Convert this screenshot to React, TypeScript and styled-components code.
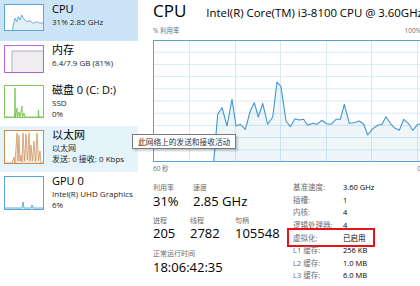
import React from 'react';
import styled, { createGlobalStyle } from 'styled-components';

const GlobalStyle = createGlobalStyle`
  html, body {
    margin: 0;
    padding: 0;
    background: #fff;
  }
  body {
    font-family: "Open Sans", "Noto Sans CJK SC", sans-serif;
    color: #000;
  }
`;

const Window = styled.div`
  position: relative;
  display: flex;
  width: 420px;
  height: 286px;
  overflow: hidden;
  background: #fff;
`;

const Sidebar = styled.div`
  width: 138px;
  flex-shrink: 0;
  display: flex;
  flex-direction: column;
  overflow: hidden;
`;

const Row = styled.div<{ $h: number; $state?: 'selected' | 'hover' }>`
  display: flex;
  gap: 8px;
  height: ${p => p.$h}px;
  padding: 2px 0 0 4px;
  box-sizing: border-box;
  background: ${p =>
    p.$state === 'selected' ? '#cce4f7' : p.$state === 'hover' ? '#e5f3fb' : 'transparent'};
`;

const Thumb = styled.div<{ $color: string; $h: number }>`
  width: 40px;
  height: ${p => p.$h}px;
  margin-top: 2px;
  border: 1px solid ${p => p.$color};
  box-sizing: border-box;
  background: #fff;
  flex-shrink: 0;

  svg {
    display: block;
  }
`;

const RowText = styled.div`
  display: flex;
  flex-direction: column;
  margin-top: -1px;
  white-space: nowrap;
`;

const RowTitle = styled.div`
  font-size: 11px;
  line-height: 15px;
  color: #000;
`;

const RowSub = styled.div`
  font-size: 8px;
  line-height: 11px;
  color: #1e1e1e;
`;

const Main = styled.div`
  flex: 1;
  min-width: 0;
  padding-left: 15px;
  overflow: hidden;
  display: flex;
  flex-direction: column;
`;

const Header = styled.div`
  display: flex;
  align-items: baseline;
  gap: 20px;
  height: 22px;
  white-space: nowrap;
`;

const BigTitle = styled.div`
  font-size: 17px;
  line-height: 22px;
`;

const CpuName = styled.div`
  font-size: 11.4px;
  line-height: 22px;
`;

const AxisRow = styled.div<{ $mt: number }>`
  width: 268px;
  flex-shrink: 0;
  display: flex;
  justify-content: space-between;
  font-size: 6.5px;
  line-height: 10px;
  color: #707070;
  margin-top: ${p => p.$mt}px;
  white-space: nowrap;
`;

const Graph = styled.div`
  width: 268px;
  height: 122px;
  flex-shrink: 0;
  margin-top: 4px;
  border: 1px solid #5aa2d6;
  box-sizing: border-box;

  svg {
    display: block;
  }
`;

const StatsArea = styled.div`
  display: flex;
  margin-top: 7px;
`;

const LeftStats = styled.div`
  width: 137px;
  flex-shrink: 0;
  padding-top: 2px;
  display: flex;
  flex-direction: column;
`;

const StatGroup = styled.div<{ $mt?: number }>`
  display: flex;
  margin-top: ${p => p.$mt ?? 0}px;
  white-space: nowrap;
`;

const Metric = styled.div<{ $w?: number }>`
  width: ${p => (p.$w ? `${p.$w}px` : 'auto')};
  display: flex;
  flex-direction: column;
`;

const MetricLabel = styled.div`
  font-size: 7px;
  line-height: 10px;
  color: #6d6d6d;
`;

const MetricValue = styled.div`
  font-size: 13px;
  line-height: 17px;
  margin-top: -0.5px;
  color: #000;
`;

const RightStats = styled.div`
  display: flex;
  flex-direction: column;
`;

const InfoRow = styled.div<{ $marked?: boolean }>`
  display: grid;
  grid-template-columns: 53px auto;
  width: 82px;
  height: 12.6px;
  align-items: center;
  font-size: 7.5px;
  line-height: 10px;
  white-space: nowrap;
  outline: ${p => (p.$marked ? '2px solid #e8121a' : 'none')};
  outline-offset: 1px;
`;

const InfoLabel = styled.span`
  padding-left: 3px;
  color: #6d6d6d;
`;

const InfoValue = styled.span`
  color: #000;
`;

const Tooltip = styled.div`
  position: absolute;
  left: 132px;
  top: 134px;
  height: 15px;
  padding: 0 5px;
  box-sizing: border-box;
  display: flex;
  align-items: center;
  font-size: 7.7px;
  color: #333;
  background: #fff;
  border: 1px solid #7a7a7a;
  box-shadow: 2px 2px 2px rgba(0, 0, 0, 0.18);
  white-space: nowrap;
`;

type Pt = [number, number];

const toPath = (pts: Pt[]) => pts.map((p, i) => `${i ? 'L' : 'M'}${p[0]},${p[1]}`).join(' ');

const Spark = ({ w, h, pts, stroke, fill }: { w: number; h: number; pts: Pt[]; stroke: string; fill: string }) => {
  const line = toPath(pts);
  const last = pts[pts.length - 1];
  const area = `${line} L${last[0]},${h} L${pts[0][0]},${h} Z`;
  return (
    <svg width={w} height={h} viewBox={`0 0 ${w} ${h}`}>
      <path d={area} fill={fill} stroke="none" />
      <path d={line} fill="none" stroke={stroke} strokeWidth={0.8} />
    </svg>
  );
};

const cpuThumb: Pt[] = [
  [7.7, 25], [8, 21], [10, 13.3], [11.7, 16.7], [13.3, 11.7], [15, 15], [16.7, 10], [18.3, 13.3],
  [20, 15], [21.7, 16.7], [25, 15.7], [28.3, 18.3], [31.7, 16.7], [35, 18.3], [38, 17.7],
];

const diskThumb: Pt[] = [
  [0, 31], [9.5, 31], [10, 2], [10.5, 31], [12, 22], [12.5, 31], [14, 26], [15, 31], [17, 20],
  [17.5, 31], [19, 27], [20, 31], [33, 31], [33.5, 24], [34, 31], [38, 31],
];

const netThumb: Pt[] = [
  [0, 32], [7, 32], [9, 26], [10, 32], [12, 2], [13, 30], [14, 4], [15, 30], [16, 24], [17, 31],
  [18, 2], [19.5, 30], [21, 3], [22.5, 29], [24, 2], [25, 30], [26, 14], [27.5, 30], [29, 10],
  [30.5, 31], [32, 2], [33.5, 30], [35, 20], [36, 32], [38, 32],
];

const gpuThumb: Pt[] = [
  [0, 31], [17, 31], [18, 25], [19, 31], [26, 31], [27, 28], [28, 31], [38, 31],
];

const cpuMain: Pt[] = [
  [59.7, 121], [63.7, 73.3], [68, 66.7], [73, 85], [78, 58.3], [82, 85], [86.3, 83.3],
  [91.3, 88.3], [96.3, 70], [100.3, 61.7], [104.3, 76], [108.7, 62.3], [113.7, 83.3],
  [118.7, 76], [123, 41], [127, 45.7], [132, 80], [136.3, 85.7], [141, 77.7], [145.3, 79],
  [149.7, 78.3], [153.7, 84.3], [158.7, 82.3], [163, 83.3], [167.7, 79.3], [172.7, 82.7],
  [177, 83.3], [182, 78.3], [186.3, 78.3], [190.3, 63.3], [195.3, 82.3], [200.3, 81.7],
  [205.3, 80], [209.7, 83.3], [213.7, 94], [218.7, 87.7], [223.7, 84.3], [228, 83.3],
  [232, 75.7], [236.3, 82.3], [240.3, 86.7], [245.3, 89.3], [249.7, 78.3], [254.3, 82.3],
  [258.7, 89.3], [263.7, 83.3], [267, 83.3],
];

const CpuGraph = () => {
  const w = 266;
  const h = 120;
  const vLines = [35, 81, 126, 172, 217, 263];
  const hLines = Array.from({ length: 9 }, (_, i) => (i + 1) * 12.2 - 1);
  const line = toPath(cpuMain);
  const area = `${line} L${w},83.3 L${w},${h} L59.7,${h} Z`;
  return (
    <svg width={w} height={h} viewBox={`0 0 ${w} ${h}`}>
      {vLines.map(x => (
        <line key={`v${x}`} x1={x + 0.5} y1={0} x2={x + 0.5} y2={h} stroke="#d9eaf4" strokeWidth={1} />
      ))}
      {hLines.map(y => (
        <line key={`h${y}`} x1={0} y1={y} x2={w} y2={y} stroke="#d9eaf4" strokeWidth={1} />
      ))}
      <path d={area} fill="rgba(17,125,187,0.07)" />
      <path d={`${line} L${w},83.3`} fill="none" stroke="#4196d2" strokeWidth={1.1} strokeLinejoin="round" />
    </svg>
  );
};

const info: [string, string][] = [
  ['基准速度:', '3.60 GHz'],
  ['插槽:', '1'],
  ['内核:', '4'],
  ['逻辑处理器:', '4'],
  ['虚拟化:', '已启用'],
  ['L1 缓存:', '256 KB'],
  ['L2 缓存:', '1.0 MB'],
  ['L3 缓存:', '6.0 MB'],
];

const App = () => {
  return (
    <>
      <GlobalStyle />
      <Window>
        <Sidebar>
          <Row $h={41} $state="selected">
            <Thumb $color="#5aa5da" $h={27}>
              <Spark w={38} h={25} pts={cpuThumb} stroke="#4a9bd5" fill="rgba(17,125,187,0.12)" />
            </Thumb>
            <RowText>
              <RowTitle>CPU</RowTitle>
              <RowSub>31% 2.85 GHz</RowSub>
            </RowText>
          </Row>
          <Row $h={40}>
            <Thumb $color="#b862d2" $h={28}>
              <svg width={38} height={26} viewBox="0 0 38 26">
                <rect x={7} y={5} width={31} height={21} fill="#efedef" />
                <path d="M7,26 L7,5 L38,5" fill="none" stroke="#a79aab" strokeWidth={0.8} />
              </svg>
            </Thumb>
            <RowText>
              <RowTitle>内存</RowTitle>
              <RowSub>6.4/7.9 GB (81%)</RowSub>
            </RowText>
          </Row>
          <Row $h={45}>
            <Thumb $color="#86c75c" $h={33}>
              <Spark w={38} h={31} pts={diskThumb} stroke="#6cbf45" fill="rgba(77,166,12,0.12)" />
            </Thumb>
            <RowText>
              <RowTitle>磁盘 0 (C: D:)</RowTitle>
              <RowSub>SSD</RowSub>
              <RowSub>0%</RowSub>
            </RowText>
          </Row>
          <Row $h={46} $state="hover">
            <Thumb $color="#c98c52" $h={34}>
              <Spark w={38} h={32} pts={netThumb} stroke="#cf9660" fill="rgba(167,79,1,0.13)" />
            </Thumb>
            <RowText>
              <RowTitle>以太网</RowTitle>
              <RowSub>以太网</RowSub>
              <RowSub>发送: 0 接收: 0 Kbps</RowSub>
            </RowText>
          </Row>
          <Row $h={46}>
            <Thumb $color="#5aa5da" $h={34}>
              <Spark w={38} h={32} pts={gpuThumb} stroke="#4a9bd5" fill="rgba(17,125,187,0.1)" />
            </Thumb>
            <RowText>
              <RowTitle>GPU 0</RowTitle>
              <RowSub>Intel(R) UHD Graphics</RowSub>
              <RowSub>6%</RowSub>
            </RowText>
          </Row>
        </Sidebar>

        <Main>
          <Header>
            <BigTitle>CPU</BigTitle>
            <CpuName>Intel(R) Core(TM) i3-8100 CPU @ 3.60GHz</CpuName>
          </Header>
          <AxisRow $mt={4}>
            <span>% 利用率</span>
            <span>100%</span>
          </AxisRow>
          <Graph>
            <CpuGraph />
          </Graph>
          <AxisRow $mt={2}>
            <span>60 秒</span>
            <span>0</span>
          </AxisRow>

          <StatsArea>
            <LeftStats>
              <StatGroup>
                <Metric $w={40}>
                  <MetricLabel>利用率</MetricLabel>
                  <MetricValue>31%</MetricValue>
                </Metric>
                <Metric>
                  <MetricLabel>速度</MetricLabel>
                  <MetricValue>2.85 GHz</MetricValue>
                </Metric>
              </StatGroup>
              <StatGroup $mt={6}>
                <Metric $w={37}>
                  <MetricLabel>进程</MetricLabel>
                  <MetricValue>205</MetricValue>
                </Metric>
                <Metric $w={45}>
                  <MetricLabel>线程</MetricLabel>
                  <MetricValue>2782</MetricValue>
                </Metric>
                <Metric>
                  <MetricLabel>句柄</MetricLabel>
                  <MetricValue>105548</MetricValue>
                </Metric>
              </StatGroup>
              <StatGroup $mt={7}>
                <Metric>
                  <MetricLabel>正常运行时间</MetricLabel>
                  <MetricValue>18:06:42:35</MetricValue>
                </Metric>
              </StatGroup>
            </LeftStats>
            <RightStats>
              {info.map(([k, v]) => (
                <InfoRow key={k} $marked={k === '虚拟化:'}>
                  <InfoLabel>{k}</InfoLabel>
                  <InfoValue>{v}</InfoValue>
                </InfoRow>
              ))}
            </RightStats>
          </StatsArea>
        </Main>

        <Tooltip>此网络上的发送和接收活动</Tooltip>
      </Window>
    </>
  );
};

export default App;
